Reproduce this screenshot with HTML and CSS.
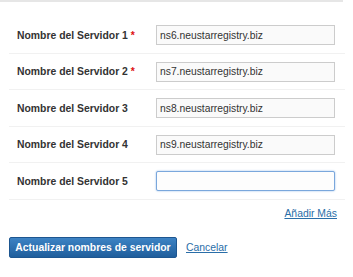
FILE: index.html
```html
<!DOCTYPE html>
<html lang="es">
<head>
  <meta charset="UTF-8">
  <title>Nombres de servidor</title>
  <link rel="stylesheet" href="styles.css">
</head>
<body>
  <div class="top-rule"></div>
  <form class="ns-form">
    <div class="ns-row">
      <label>Nombre del Servidor 1 <span class="req">*</span></label>
      <input type="text" value="ns6.neustarregistry.biz">
    </div>
    <div class="ns-row">
      <label>Nombre del Servidor 2 <span class="req">*</span></label>
      <input type="text" value="ns7.neustarregistry.biz">
    </div>
    <div class="ns-row">
      <label>Nombre del Servidor 3</label>
      <input type="text" value="ns8.neustarregistry.biz">
    </div>
    <div class="ns-row">
      <label>Nombre del Servidor 4</label>
      <input type="text" value="ns9.neustarregistry.biz">
    </div>
    <div class="ns-row">
      <label>Nombre del Servidor 5</label>
      <input type="text" class="focused" value="">
    </div>
    <div class="add-more"><a href="#">Añadir Más</a></div>
    <div class="actions">
      <button type="submit" class="btn-primary">Actualizar nombres de servidor</button>
      <a href="#">Cancelar</a>
    </div>
  </form>
</body>
</html>
```

FILE: styles.css
```css
body {
  margin: 0;
  background: #fff;
  font-family: "Liberation Sans", Arial, sans-serif;
  font-size: 10.4px;
  color: #333;
}

.top-rule {
  width: 343px;
  height: 2px;
  background: #e6e6e6;
}

.ns-form {
  margin: 15px 8px 0 9px;
}

.ns-row {
  display: flex;
  align-items: center;
  padding: 8px 0 7.5px;
  border-bottom: 1px solid #f1f1f1;
}

.ns-row label {
  width: 139px;
  padding-left: 8px;
  font-weight: bold;
  color: #333;
}

.req {
  color: #d11;
}

.ns-row input {
  box-sizing: border-box;
  width: 179px;
  height: 20px;
  margin: 0;
  padding: 0 3px;
  border: 1px solid #ccc;
  background: #fafafa;
  font-family: "Liberation Sans", Arial, sans-serif;
  font-size: 10.3px;
  color: #333;
  outline: none;
}

.ns-row input.focused {
  border: 1px solid #7aa7dc;
  border-radius: 2px;
  box-shadow: 0 0 2px #8fb6e6;
  background: #fdfdfd;
}

a {
  color: #2a6ea8;
  text-decoration: underline;
}

.add-more {
  margin-top: 7px;
  padding-right: 8px;
  text-align: right;
  line-height: 13px;
}

.actions {
  display: flex;
  align-items: center;
  gap: 9px;
  margin-top: 17px;
}

.btn-primary {
  height: 21px;
  width: 168px;
  padding: 0;
  border: 1px solid #1d5690;
  border-radius: 2px;
  background: linear-gradient(#3d83c4, #1f5e9c);
  color: #fff;
  font-family: "Liberation Sans", Arial, sans-serif;
  font-size: 10.4px;
  font-weight: bold;
}
```
